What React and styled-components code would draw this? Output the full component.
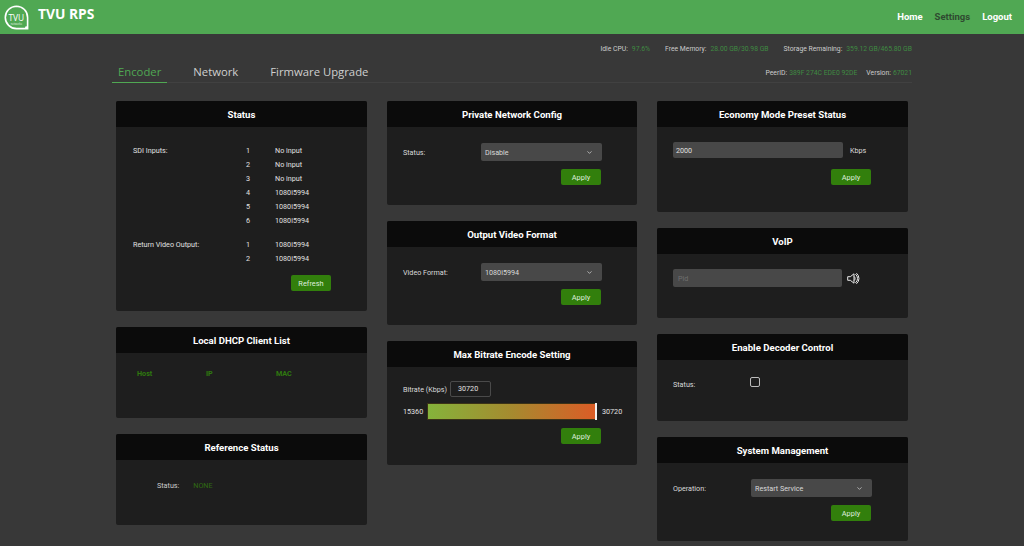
import React from "react";
import styled, { createGlobalStyle } from "styled-components";
import { ChevronDown } from "lucide-react";

const Global = createGlobalStyle`
  html, body { margin: 0; padding: 0; background: #383838; }
  body { font-family: Roboto, "Open Sans", sans-serif; color: #e0e0e0; font-size: 7.2px; height: 546px; overflow: hidden; }
  * { box-sizing: border-box; }
`;

const TopBar = styled.header`
  height: 34px; background: #50a853; display: flex; align-items: center;
  padding: 0 12px 0 4px;
`;
const Brand = styled.div`
  font-family: "Open Sans", sans-serif;
  font-size: 13.8px; font-weight: 700; color: #fff; margin-left: 9px; margin-right: auto; margin-top: -7px;
`;
const NavLink = styled.a`
  font-size: 9.5px; font-weight: 700; margin-left: 12px; color: ${p => (p.$dim ? "#2f4a30" : "#fff")};
  margin-top: -2px;
`;
const Main = styled.main`
  width: 800px; margin: 0 0 0 112px;
`;
const Stats = styled.div`
  display: flex; justify-content: flex-end; gap: 15px; height: 29px; padding-top: 10px; line-height: 10px; font-size: 6.8px;
`;
const Stat = styled.span`
  color: #cccccc;
  b { font-weight: 400; color: #3f8a42; margin-left: ${p => (p.$tight ? 2 : 4)}px; }
`;
const TabRow = styled.nav`
  height: 20px; display: flex; align-items: flex-start; border-bottom: 1px solid #414141;
`;
const Tab = styled.a`
  font-family: "Open Sans", sans-serif;
  height: 20px; font-size: 11.3px; line-height: 18px; padding: 0 6px; margin-right: ${p => p.$gap}px;
  color: ${p => (p.$active ? "#50a853" : "#cfcfcf")};
  border-bottom: ${p => (p.$active ? "1px solid #50a853" : "none")};
`;
const Peer = styled.div`
  margin-left: auto; padding-top: 5px; line-height: 10px; display: flex; gap: 9px; font-size: 6.8px;
`;
const Columns = styled.div`
  display: grid; grid-template-columns: 251px 250px 251px; column-gap: 20px; padding: 18px 0 0 4px;
`;
const Column = styled.div`
  display: flex; flex-direction: column; gap: 16px;
`;
const Card = styled.section`
  height: ${p => p.$h}px; background: #1e1e1e; border-radius: 2px; overflow: hidden;
`;
const CardTitle = styled.h2`
  margin: 0; height: 26px; background: #0b0b0b; color: #fff; font-size: 9.6px; font-weight: 700;
  text-align: center; line-height: 27px;
`;
const Body = styled.div`
  padding: ${p => p.$top ?? 15}px ${p => p.$right ?? 36}px 0 16px;
`;
const StatusGrid = styled.div`
  display: grid; grid-template-columns: 113px 29px 1fr; grid-auto-rows: 14px; line-height: 14px; padding-left: 1px;
  & + & { margin-top: 10px; }
`;
const Actions = styled.div`
  display: flex; justify-content: flex-end; margin-top: ${p => p.$mt ?? 8}px;
`;
const Btn = styled.button`
  width: 40px; height: 16px; padding: 0; border: none; border-radius: 2px; background: #327f0c;
  color: #dfeedd; font: 400 7.4px Roboto, sans-serif;
`;
const FormRow = styled.div`
  display: flex; align-items: center; height: ${p => p.$h ?? 19}px;
`;
const Label = styled.label`
  width: ${p => p.$w ?? 78}px; flex: none; color: #dadada; padding-top: 1px;
`;
const Select = styled.div`
  width: 121px; height: 18px; margin-right: -1px; background: #484848; border-radius: 2px; display: flex; align-items: center;
  justify-content: space-between; padding: 1px 9px 0 4px; color: #dadada;
`;
const TextInput = styled.div`
  width: ${p => p.$w}px; height: ${p => p.$h}px; background: #484848; border-radius: 2px; padding-left: ${p => p.$pl ?? 3}px;
  display: flex; align-items: center; color: ${p => (p.$ph ? "#6f6f6f" : "#e0e0e0")};
`;
const Unit = styled.span`
  margin-left: 7px; color: #dadada;
`;
const BoxInput = styled.div`
  width: 41px; height: 16px; border: 1px solid #4a4a4a; border-radius: 2px; padding-left: 7px; line-height: 14px;
`;
const SliderRow = styled.div`
  display: flex; align-items: center; height: 16px; margin-top: 6px; margin-right: -27px;
`;
const RangeLabel = styled.span`
  width: 24px; flex: none;
`;
const Track = styled.div`
  width: 170px; height: 17px; margin-right: 5px; position: relative;
  background: linear-gradient(90deg, #85b33b 0%, #a68a2f 50%, #dc5c26 100%);
  border: 1px solid #3b3217;
`;
const Thumb = styled.span`
  position: absolute; right: -1px; top: -1px; width: 2px; height: 17px; background: #f2f2f2;
`;
const DhcpHead = styled.div`
  display: grid; grid-template-columns: 69px 70px 1fr; padding-left: 5px; color: #2f7a0e; font-weight: 700; line-height: 10px;
`;
const RefRow = styled.div`
  display: flex; padding-left: 25px; line-height: 10px; color: #cccccc;
  b { font-weight: 400; color: #2f6a12; margin-left: 14px; }
`;
const Check = styled.span`
  width: 10px; height: 10px; border: 1px solid #bcbcbc; border-radius: 2px; margin-top: -5px;
`;
const SpeakerIcon = styled.svg`
  margin-left: 5px; flex: none;
`;

const Logo = () => (
  <svg width="25" height="25" viewBox="0 0 25 25" aria-label="TVU logo">
    <path d="M12.5 1.2a11.2 11.2 0 1 0 0 22.4H23.6V12.5A11.2 11.2 0 0 0 12.5 1.2Z" fill="none" stroke="#fff" strokeWidth="1.6" />
    <text x="12.3" y="15.6" fontSize="8.4" fill="#fff" textAnchor="middle" fontFamily="Open Sans, sans-serif">TVU</text>
    <text x="12.3" y="19.8" fontSize="2.6" fill="#e6f3e6" textAnchor="middle" fontFamily="Open Sans, sans-serif">networks</text>
    <circle cx="22.3" cy="22.4" r="1.2" fill="#fff" />
  </svg>
);

const Speaker = () => (
  <SpeakerIcon width="13" height="13" viewBox="0 0 13 13" fill="none" stroke="#e8e8e8" strokeWidth="1" aria-label="speaker">
    <path d="M.7 4.7h2.6L7 1.8v9.4L3.3 8.3H.7Z" strokeLinejoin="round" />
    <path d="M7 4.4a2.6 2.6 0 0 1 0 4.2M8.4 2.2a5.4 5.4 0 0 1 0 8.6M9.4 1.2a6.8 6.8 0 0 1 0 10.6" />
  </SpeakerIcon>
);

const SelectBox = ({ value }) => (
  <Select>
    {value}
    <ChevronDown size={7} color="#d8d8d8" strokeWidth={2.4} />
  </Select>
);

const Apply = ({ mt }) => (
  <Actions $mt={mt}>
    <Btn>Apply</Btn>
  </Actions>
);

const sdi = [["SDI Inputs:", 1, "No input"], ["", 2, "No input"], ["", 3, "No input"], ["", 4, "1080i5994"], ["", 5, "1080i5994"], ["", 6, "1080i5994"]];
const ret = [["Return Video Output:", 1, "1080i5994"], ["", 2, "1080i5994"]];

const Row = ({ r }) => (
  <>
    <span>{r[0]}</span>
    <span>{r[1]}</span>
    <span>{r[2]}</span>
  </>
);

export default function App() {
  return (
    <>
      <Global />
      <TopBar>
        <Logo />
        <Brand>TVU RPS</Brand>
        <NavLink>Home</NavLink>
        <NavLink $dim>Settings</NavLink>
        <NavLink>Logout</NavLink>
      </TopBar>
      <Main>
        <Stats>
          <Stat>Idle CPU:<b>97.6%</b></Stat>
          <Stat>Free Memory:<b>28.00 GB/30.98 GB</b></Stat>
          <Stat>Storage Remaining:<b>359.12 GB/465.80 GB</b></Stat>
        </Stats>
        <TabRow>
          <Tab $active $gap={20}>Encoder</Tab>
          <Tab $gap={20}>Network</Tab>
          <Tab $gap={0}>Firmware Upgrade</Tab>
          <Peer>
            <Stat $tight>PeerID:<b>389F 274C EDE0 92DE</b></Stat>
            <Stat $tight>Version:<b>67021</b></Stat>
          </Peer>
        </TabRow>
        <Columns>
          <Column>
            <Card $h={210}>
              <CardTitle>Status</CardTitle>
              <Body $top={17}>
                <StatusGrid>
                  {sdi.map(r => <Row key={r[1]} r={r} />)}
                </StatusGrid>
                <StatusGrid>
                  {ret.map(r => <Row key={r[1]} r={r} />)}
                </StatusGrid>
                <Actions $mt={9}><Btn>Refresh</Btn></Actions>
              </Body>
            </Card>
            <Card $h={91}>
              <CardTitle>Local DHCP Client List</CardTitle>
              <Body $top={16}>
                <DhcpHead><span>Host</span><span>IP</span><span>MAC</span></DhcpHead>
              </Body>
            </Card>
            <Card $h={91}>
              <CardTitle>Reference Status</CardTitle>
              <Body $top={21}>
                <RefRow>Status:<b>NONE</b></RefRow>
              </Body>
            </Card>
          </Column>
          <Column>
            <Card $h={104}>
              <CardTitle>Private Network Config</CardTitle>
              <Body>
                <FormRow><Label>Status:</Label><SelectBox value="Disable" /></FormRow>
                <Apply />
              </Body>
            </Card>
            <Card $h={104}>
              <CardTitle>Output Video Format</CardTitle>
              <Body>
                <FormRow><Label>Video Format:</Label><SelectBox value="1080i5994" /></FormRow>
                <Apply />
              </Body>
            </Card>
            <Card $h={124}>
              <CardTitle>Max Bitrate Encode Setting</CardTitle>
              <Body $top={14}>
                <FormRow $h={16}><Label $w={47}>Bitrate (Kbps)</Label><BoxInput>30720</BoxInput></FormRow>
                <SliderRow>
                  <RangeLabel>15360</RangeLabel>
                  <Track><Thumb /></Track>
                  <span>30720</span>
                </SliderRow>
                <Apply mt={9} />
              </Body>
            </Card>
          </Column>
          <Column>
            <Card $h={111}>
              <CardTitle>Economy Mode Preset Status</CardTitle>
              <Body $right={37}>
                <FormRow $h={16}><TextInput $w={170} $h={16}>2000</TextInput><Unit>Kbps</Unit></FormRow>
                <Apply mt={11} />
              </Body>
            </Card>
            <Card $h={90}>
              <CardTitle>VoIP</CardTitle>
              <Body>
                <FormRow $h={18}><TextInput $w={169} $h={18} $ph $pl={5}>Pid</TextInput><Speaker /></FormRow>
              </Body>
            </Card>
            <Card $h={87}>
              <CardTitle>Enable Decoder Control</CardTitle>
              <Body $top={19}>
                <FormRow $h={10}><Label $w={77}>Status:</Label><Check /></FormRow>
              </Body>
            </Card>
            <Card $h={104}>
              <CardTitle>System Management</CardTitle>
              <Body $right={37}>
                <FormRow><Label>Operation:</Label><SelectBox value="Restart Service" /></FormRow>
                <Apply />
              </Body>
            </Card>
          </Column>
        </Columns>
      </Main>
    </>
  );
}
